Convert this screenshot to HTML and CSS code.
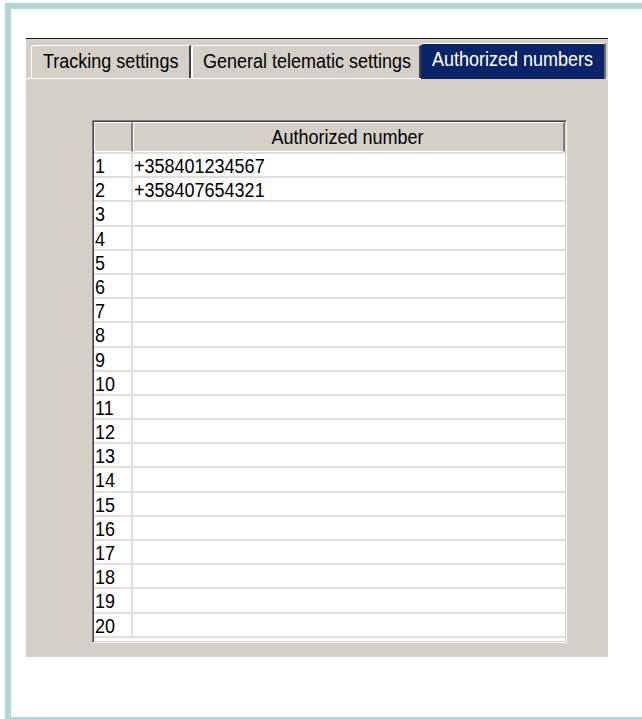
FILE: index.html
```html
<!DOCTYPE html>
<html>
<head>
<meta charset="utf-8">
<title>Authorized numbers</title>
<link rel="stylesheet" href="styles.css">
</head>
<body>
<div class="frame">
  <div class="panel">
    <div class="tabs">
      <div class="tab tab-tracking"><span class="txt">Tracking settings</span></div>
      <div class="tab tab-general"><span class="txt">General telematic settings</span></div>
      <div class="tab tab-numbers active"><span class="txt">Authorized numbers</span></div>
    </div>
    <div class="page">
      <div class="grid">
        <div class="grid-head">
          <div class="hcell hcell-index"></div>
          <div class="hcell hcell-title"><span class="txt">Authorized number</span></div>
        </div>
        <div class="grid-body">
          <div class="row"><div class="idx"><span class="txt">1</span></div><div class="num"><span class="txt">+358401234567</span></div></div>
          <div class="row"><div class="idx"><span class="txt">2</span></div><div class="num"><span class="txt">+358407654321</span></div></div>
          <div class="row"><div class="idx"><span class="txt">3</span></div><div class="num"></div></div>
          <div class="row"><div class="idx"><span class="txt">4</span></div><div class="num"></div></div>
          <div class="row"><div class="idx"><span class="txt">5</span></div><div class="num"></div></div>
          <div class="row"><div class="idx"><span class="txt">6</span></div><div class="num"></div></div>
          <div class="row"><div class="idx"><span class="txt">7</span></div><div class="num"></div></div>
          <div class="row"><div class="idx"><span class="txt">8</span></div><div class="num"></div></div>
          <div class="row"><div class="idx"><span class="txt">9</span></div><div class="num"></div></div>
          <div class="row"><div class="idx"><span class="txt">10</span></div><div class="num"></div></div>
          <div class="row"><div class="idx"><span class="txt">11</span></div><div class="num"></div></div>
          <div class="row"><div class="idx"><span class="txt">12</span></div><div class="num"></div></div>
          <div class="row"><div class="idx"><span class="txt">13</span></div><div class="num"></div></div>
          <div class="row"><div class="idx"><span class="txt">14</span></div><div class="num"></div></div>
          <div class="row"><div class="idx"><span class="txt">15</span></div><div class="num"></div></div>
          <div class="row"><div class="idx"><span class="txt">16</span></div><div class="num"></div></div>
          <div class="row"><div class="idx"><span class="txt">17</span></div><div class="num"></div></div>
          <div class="row"><div class="idx"><span class="txt">18</span></div><div class="num"></div></div>
          <div class="row"><div class="idx"><span class="txt">19</span></div><div class="num"></div></div>
          <div class="row"><div class="idx"><span class="txt">20</span></div><div class="num"></div></div>
        </div>
      </div>
    </div>
  </div>
</div>
</body>
</html>
```

FILE: styles.css
```css
* {
  box-sizing: border-box;
}

html, body {
  margin: 0;
  padding: 0;
  background: #ffffff;
}

body {
  font-family: "Liberation Sans", Arial, sans-serif;
  font-size: 18px;
  color: #000000;
}

/* the dialog font is drawn a little taller than it is wide */
.txt {
  display: inline-block;
  transform: scaleY(1.16);
  transform-origin: 50% 55%;
}

/* teal outline around the window capture */
.frame {
  margin: 3px 0 0 5px;
  height: 716px;
  border-top: 6px solid #b3d7d5;
  border-left: 6px solid #b3d7d5;
  border-bottom: 2px solid #b3d7d5;
  padding: 29px 0 0 15px;
}

.panel {
  width: 582px;
  height: 619px;
  background: #d4d0c8;
  border-top: 1px solid #1c1c1c;
  display: flex;
  flex-direction: column;
}

/* tab strip */
.tabs {
  display: flex;
  align-items: flex-end;
  padding: 4px 0 0 5px;
  height: 39px;
}

.tab {
  height: 33px;
  padding-left: 11px;
  line-height: 31px;
  white-space: nowrap;
  border-top: 1px solid #ffffff;
  border-left: 1px solid #ffffff;
  border-right: 2px solid #404040;
  border-top-left-radius: 3px;
  background: #d4d0c8;
}

.tab-tracking {
  width: 160px;
}

.tab-general {
  width: 230px;
  border-left: 2px solid #ffffff;
  padding-left: 10px;
}

.tab-numbers {
  width: 185px;
}

.tab.active {
  position: relative;
  z-index: 1;
  height: 36px;
  margin-bottom: -1px;
  line-height: 31px;
  background: #0a246a;
  color: #ffffff;
  border-top: 1px solid #ffffff;
  border-left: 0;
  border-right: 2px solid #6f6d69;
}

/* tab page */
.page {
  flex: 1;
  border-top: 1px solid #ffffff;
  padding: 41px 0 0 66px;
}

/* sunken string grid */
.grid {
  width: 475px;
  height: 523px;
  background: #ffffff;
  border: 1px solid;
  border-color: #808080 #ffffff #ffffff #808080;
  box-shadow: inset 1px 1px 0 #404040, inset -1px -1px 0 #d4d0c8;
  padding: 1px;
}

.grid-head {
  display: flex;
  height: 30px;
  background: #d4d0c8;
}

.hcell {
  border-top: 1px solid #ffffff;
  border-left: 1px solid #ffffff;
  border-right: 2px solid #808080;
  border-bottom: 1px solid #ffffff;
  line-height: 29px;
}

.hcell-index {
  width: 39px;
}

.hcell-title {
  flex: 1;
  text-align: center;
  padding-right: 2px;
}

.grid-body {
  border-top: 2px solid #e2dfdb;
}

.row {
  display: flex;
  height: 24.2px;
  border-bottom: 2px solid #e2dfdb;
}

.idx {
  width: 39px;
  padding-left: 1px;
  border-right: 2px solid #e2dfdb;
  line-height: 24px;
}

.num {
  flex: 1;
  padding-left: 1px;
  line-height: 24px;
}
```
